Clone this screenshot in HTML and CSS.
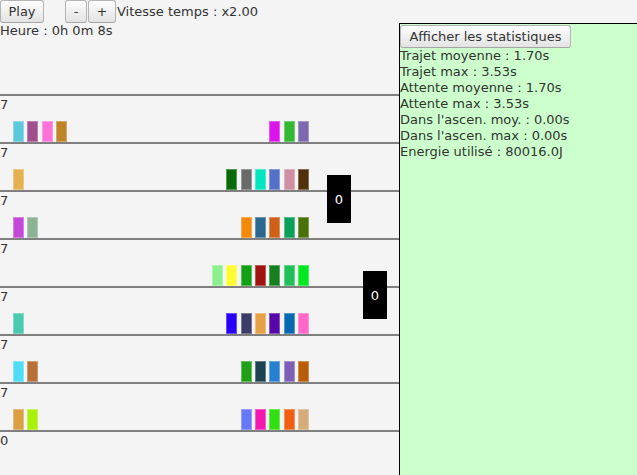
FILE: index.html
```html
<!DOCTYPE html>
<html lang="fr">
<head>
<meta charset="utf-8">
<title>Simulation ascenseurs</title>
<link rel="stylesheet" href="styles.css">
</head>
<body>
<div class="topbar">
  <button class="btn btn-play">Play</button>
  <button class="btn btn-minus">-</button>
  <button class="btn btn-plus">+</button>
  <span class="speed">Vitesse temps : x2.00</span>
</div>
<div class="main">
  <div class="sim">
    <div class="clock">Heure : 0h 0m 8s</div>
    <div class="building">
      <div class="floor">
        <div class="label">7</div>
        <div class="queue">
          <div class="group left">
            <span class="p" style="background:#5bc8dc"></span><span class="p" style="background:#a0508c"></span><span class="p" style="background:#ff70d8"></span><span class="p" style="background:#c08428"></span>
          </div>
          <div class="group right">
            <span class="p" style="background:#dc14ec"></span><span class="p" style="background:#34b834"></span><span class="p" style="background:#7c68ac"></span>
          </div>
        </div>
      </div>
      <div class="floor">
        <div class="label">7</div>
        <div class="queue">
          <div class="group left">
            <span class="p" style="background:#e4b050"></span>
          </div>
          <div class="group right">
            <span class="p" style="background:#0a6a0a"></span><span class="p" style="background:#6a6a6a"></span><span class="p" style="background:#00e4c0"></span><span class="p" style="background:#5470c8"></span><span class="p" style="background:#d090a4"></span><span class="p" style="background:#503008"></span>
          </div>
        </div>
      </div>
      <div class="floor">
        <div class="label">7</div>
        <div class="queue">
          <div class="group left">
            <span class="p" style="background:#c448d8"></span><span class="p" style="background:#8cb494"></span>
          </div>
          <div class="group right">
            <span class="p" style="background:#f48808"></span><span class="p" style="background:#2a6890"></span><span class="p" style="background:#d06018"></span><span class="p" style="background:#0aa05a"></span><span class="p" style="background:#4a7008"></span>
          </div>
        </div>
      </div>
      <div class="floor">
        <div class="label">7</div>
        <div class="queue">
          <div class="group left"></div>
          <div class="group right">
            <span class="p" style="background:#8cf08c"></span><span class="p" style="background:#fcfc30"></span><span class="p" style="background:#14a014"></span><span class="p" style="background:#a01410"></span><span class="p" style="background:#168020"></span><span class="p" style="background:#20c058"></span><span class="p" style="background:#00e820"></span>
          </div>
        </div>
      </div>
      <div class="floor">
        <div class="label">7</div>
        <div class="queue">
          <div class="group left">
            <span class="p" style="background:#4ccab0"></span>
          </div>
          <div class="group right">
            <span class="p" style="background:#2800f8"></span><span class="p" style="background:#3c3c68"></span><span class="p" style="background:#e8a048"></span><span class="p" style="background:#5808a8"></span><span class="p" style="background:#0868b0"></span><span class="p" style="background:#ff68c8"></span>
          </div>
        </div>
      </div>
      <div class="floor">
        <div class="label">7</div>
        <div class="queue">
          <div class="group left">
            <span class="p" style="background:#50dcf4"></span><span class="p" style="background:#b87038"></span>
          </div>
          <div class="group right">
            <span class="p" style="background:#20a018"></span><span class="p" style="background:#1c4450"></span><span class="p" style="background:#2880d0"></span><span class="p" style="background:#7c60b8"></span><span class="p" style="background:#b85c08"></span>
          </div>
        </div>
      </div>
      <div class="floor">
        <div class="label">7</div>
        <div class="queue">
          <div class="group left">
            <span class="p" style="background:#dca044"></span><span class="p" style="background:#a8f008"></span>
          </div>
          <div class="group right">
            <span class="p" style="background:#6878fc"></span><span class="p" style="background:#f418b0"></span><span class="p" style="background:#30e010"></span><span class="p" style="background:#f06010"></span><span class="p" style="background:#d4ac7c"></span>
          </div>
        </div>
      </div>
      <div class="floor floor-last">
        <div class="label">0</div>
      </div>
      <div class="elevator e1">0</div>
      <div class="elevator e2">0</div>
    </div>
  </div>
  <div class="stats">
    <button class="btn btn-stats">Afficher les statistiques</button>
    <div class="stat">Trajet moyenne : 1.70s</div>
    <div class="stat">Trajet max : 3.53s</div>
    <div class="stat">Attente moyenne : 1.70s</div>
    <div class="stat">Attente max : 3.53s</div>
    <div class="stat">Dans l'ascen. moy. : 0.00s</div>
    <div class="stat">Dans l'ascen. max : 0.00s</div>
    <div class="stat">Energie utilisé : 80016.0J</div>
  </div>
</div>
</body>
</html>
```

FILE: styles.css
```css
* { box-sizing: border-box; }
html, body {
  margin: 0;
  padding: 0;
}
body {
  width: 637px;
  height: 475px;
  overflow: hidden;
  background: #f4f4f4;
  font-family: "DejaVu Sans", sans-serif;
  font-size: 13px;
  color: #333333;
}
.topbar {
  display: flex;
  align-items: center;
  height: 23px;
}
.btn {
  font-family: "DejaVu Sans", sans-serif;
  font-size: 13px;
  color: #333333;
  height: 23px;
  padding: 0;
  border: 1px solid #b3b3b3;
  border-bottom-color: #a6a6a6;
  border-radius: 3px;
  background: linear-gradient(#fdfdfd, #e3e3e3);
  box-shadow: inset 0 1px 0 #ffffff;
  line-height: 20px;
  text-align: center;
}
.btn-play { width: 44px; }
.btn-minus { width: 22px; margin-left: 21px; }
.btn-plus { width: 28px; margin-left: 1px; }
.speed { margin-left: 1px; line-height: 16px; }
.main {
  display: flex;
  height: 452px;
}
.sim {
  width: 399px;
  display: flex;
  flex-direction: column;
}
.clock {
  line-height: 16px;
}
.building {
  position: relative;
  margin-top: 55px;
  flex: 1;
}
.floor {
  height: 48px;
  border-top: 2px solid #7f7f7f;
  display: flex;
  flex-direction: column;
}
.floor-last { height: auto; flex: 1; }
.label {
  line-height: 15px;
  margin-top: 1px;
}
.queue {
  margin-top: auto;
  display: flex;
  height: 21px;
}
.group {
  display: flex;
  gap: 3.33px;
}
.group.left { margin-left: 13px; }
.group.right { margin-left: auto; margin-right: 90px; }
.p {
  display: block;
  width: 11px;
  height: 21px;
  box-shadow: inset 0 0 0 1px rgba(255, 255, 255, 0.3);
}
.elevator {
  position: absolute;
  width: 24px;
  height: 48px;
  background: #000000;
  color: #ffffff;
  display: flex;
  align-items: center;
  justify-content: center;
}
.e1 { left: 327px; top: 81px; }
.e2 { left: 363px; top: 177px; }
.stats {
  flex: 1;
  background: #ccffcc;
  border-top: 1px solid #000000;
  border-left: 1px solid #000000;
  display: flex;
  flex-direction: column;
  align-items: flex-start;
}
.btn-stats {
  width: 171px;
  margin-top: 1px;
}
.stat {
  line-height: 16px;
}
```
